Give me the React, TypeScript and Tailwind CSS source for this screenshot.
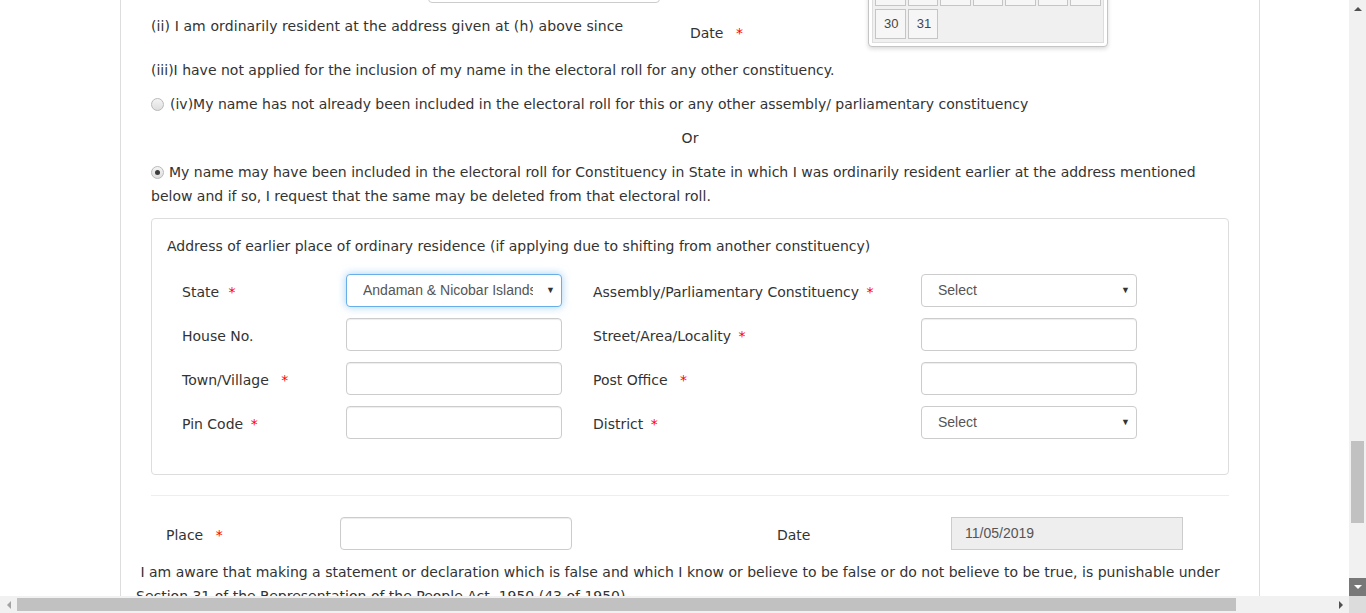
import React from 'react';

const body = "font-['DejaVu_Sans',Verdana,sans-serif] text-[14px] text-[#333]";
const ctrl = "font-['Liberation_Sans',Arial,sans-serif] text-[14px] text-[#555]";

function Star() {
  return <span className="text-[#ff0000]">*</span>;
}

function Radio({ checked }: { checked?: boolean }) {
  return (
    <span className="inline-flex w-[13px] h-[13px] shrink-0 items-center justify-center rounded-full border border-[#b9b9b9] bg-gradient-to-b from-[#f4f4f4] to-[#dedede]">
      {checked && <span className="w-[5px] h-[5px] rounded-full bg-[#3c3c3c]" />}
    </span>
  );
}

function TextBox({ w = 'w-[216px]' }: { w?: string }) {
  return <div className={`${w} h-[33px] rounded-[4px] border border-[#ccc] bg-white shadow-[inset_0_1px_1px_rgba(0,0,0,0.075)]`} />;
}

function SelectBox({ value, focused }: { value: string; focused?: boolean }) {
  return (
    <div
      className={`w-[216px] h-[33px] rounded-[4px] border bg-white flex items-center justify-between pl-[16px] pr-[6px] ${ctrl} ${
        focused ? 'border-[#66afe9] shadow-[0_0_8px_rgba(102,175,233,0.6)]' : 'border-[#ccc]'
      }`}
    >
      <span className="whitespace-nowrap overflow-hidden w-[170px]">{value}</span>
      <span className="text-[9px] text-[#333]">▼</span>
    </div>
  );
}

function Field({ label, children }: { label: React.ReactNode; children: React.ReactNode }) {
  return (
    <>
      <div className="pt-[4px] whitespace-nowrap">{label}</div>
      <div>{children}</div>
    </>
  );
}

function Calendar() {
  const cell = "h-[30px] border border-[#c5c5c5] bg-[#f6f6f6] text-right pr-[6px] leading-[28px] text-[#454545] font-['Liberation_Sans',Arial,sans-serif] text-[13px]";
  return (
    <div className="absolute left-[868px] top-[-60px] w-[240px] h-[107px] rounded-[4px] border border-[#c5c5c5] bg-white p-[3px] shadow-[0_2px_4px_rgba(0,0,0,0.15)]">
      <div className="h-full bg-[#f0f0f0] border border-[#dddddd] flex flex-col justify-end gap-[3px] p-[2px] pb-[3px]">
        <div className="grid grid-cols-7 gap-[2px]">
          {[0, 1, 2, 3, 4, 5, 6].map((i) => (
            <div key={i} className={cell} />
          ))}
        </div>
        <div className="grid grid-cols-7 gap-[2px]">
          <div className={cell}>30</div>
          <div className={cell}>31</div>
        </div>
      </div>
    </div>
  );
}

export default function App() {
  return (
    <div className={`w-[1366px] h-[613px] flex flex-col overflow-hidden bg-white ${body}`}>
      <div className="flex flex-1 min-h-0">
        {/* page */}
        <div className="relative flex-1 overflow-hidden">
          <div className="ml-[120px] w-[1140px] h-full border-x border-[#dddddd] px-[30px]">
            {/* (ii) + date */}
            <div className="flex h-[60px]">
              <div className="w-[539px]">
                <div className="mt-[-31px] ml-[277px] w-[232px] h-[34px] rounded-[4px] border border-[#ccc]" />
                <div className="mt-[13px] leading-[20px] whitespace-nowrap tracking-[0.1px]">
                  (ii) I am ordinarily resident at the address given at (h) above since
                </div>
              </div>
              <div className="pt-[23px] leading-[20px] whitespace-nowrap">
                Date <span className="ml-[8px]"><Star /></span>
              </div>
            </div>

            <div className="leading-[20px] whitespace-nowrap">
              (iii)I have not applied for the inclusion of my name in the electoral roll for any other constituency.
            </div>

            <div className="mt-[14px] flex items-center gap-[6px] leading-[20px] whitespace-nowrap">
              <Radio />
              <span>(iv)My name has not already been included in the electoral roll for this or any other assembly/ parliamentary constituency</span>
            </div>

            <div className="mt-[14px] text-center leading-[20px]">Or</div>

            <div className="mt-[12px] leading-[24px] whitespace-nowrap">
              <div className="flex items-center gap-[5px]">
                <Radio checked />
                <span>
                  My name may have been included in the electoral roll for Constituency in State in which I was ordinarily resident earlier at the address mentioned
                </span>
              </div>
              <div>below and if so, I request that the same may be deleted from that electoral roll.</div>
            </div>

            {/* previous address panel */}
            <div className="mt-[10px] rounded-[4px] border border-[#dddddd] pt-[15px] pb-[35px] px-[15px]">
              <div className="leading-[24px] whitespace-nowrap">
                Address of earlier place of ordinary residence (if applying due to shifting from another constituency)
              </div>
              <div className="mt-[16px] pl-[15px] grid grid-cols-[164px_216px_31px_328px_216px] gap-y-[11px] items-center">
                <Field label={<>State <span className="ml-[5px]"><Star /></span></>}>
                  <SelectBox value="Andaman & Nicobar Islands" focused />
                </Field>
                <div />
                <Field label={<>Assembly/Parliamentary Constituency <span className="ml-[3px]"><Star /></span></>}>
                  <SelectBox value="Select" />
                </Field>

                <Field label="House No.">
                  <TextBox />
                </Field>
                <div />
                <Field label={<>Street/Area/Locality <span className="ml-[3px]"><Star /></span></>}>
                  <TextBox />
                </Field>

                <Field label={<>Town/Village <span className="ml-[8px]"><Star /></span></>}>
                  <TextBox />
                </Field>
                <div />
                <Field label={<>Post Office <span className="ml-[8px]"><Star /></span></>}>
                  <TextBox />
                </Field>

                <Field label={<>Pin Code <span className="ml-[3px]"><Star /></span></>}>
                  <TextBox />
                </Field>
                <div />
                <Field label={<>District <span className="ml-[3px]"><Star /></span></>}>
                  <SelectBox value="Select" />
                </Field>
              </div>
            </div>

            <div className="mt-[20px] border-t border-[#eeeeee]" />

            {/* place + date */}
            <div className="mt-[21px] grid grid-cols-[189px_232px_205px_174px_232px] items-center">
              <div className="pl-[15px] pt-[4px] whitespace-nowrap">
                Place <span className="ml-[8px]"><Star /></span>
              </div>
              <TextBox w="w-[232px]" />
              <div />
              <div className="pt-[4px]">Date</div>
              <div className={`w-[232px] h-[33px] border border-[#ccc] bg-[#eeeeee] flex items-center pl-[13px] ${ctrl}`}>
                11/05/2019
              </div>
            </div>

            <div className="mt-[10px] -mx-[15px] leading-[24px] whitespace-nowrap">
              <div>&nbsp;I am aware that making a statement or declaration which is false and which I know or believe to be false or do not believe to be true, is punishable under</div>
              <div>Section 31 of the Representation of the People Act, 1950 (43 of 1950).</div>
            </div>
          </div>
          <Calendar />
        </div>

        {/* vertical scrollbar */}
        <div className="w-[17px] bg-[#f1f1f1] flex flex-col items-center">
          <div className="h-[17px] flex items-center justify-center">
            <span className="w-0 h-0 border-x-[4px] border-x-transparent border-b-[4px] border-b-[#505050]" />
          </div>
          <div className="mt-[424px] w-[13px] h-[82px] bg-[#c1c1c1]" />
          <div className="mt-auto w-[17px] h-[18px] bg-[#787878] flex items-center justify-center">
            <span className="w-0 h-0 border-x-[4px] border-x-transparent border-t-[4px] border-t-white" />
          </div>
        </div>
      </div>

      {/* horizontal scrollbar */}
      <div className="h-[17px] flex bg-[#f1f1f1]">
        <div className="flex-1 flex items-center">
          <div className="w-[17px] flex items-center justify-center">
            <span className="w-0 h-0 border-y-[4px] border-y-transparent border-r-[4px] border-r-[#a3a3a3]" />
          </div>
          <div className="w-[1219px] h-[13px] bg-[#c1c1c1]" />
          <div className="ml-auto w-[17px] flex items-center justify-center">
            <span className="w-0 h-0 border-y-[4px] border-y-transparent border-l-[4px] border-l-[#505050]" />
          </div>
        </div>
        <div className="w-[17px] bg-[#dcdcdc]" />
      </div>
    </div>
  );
}
